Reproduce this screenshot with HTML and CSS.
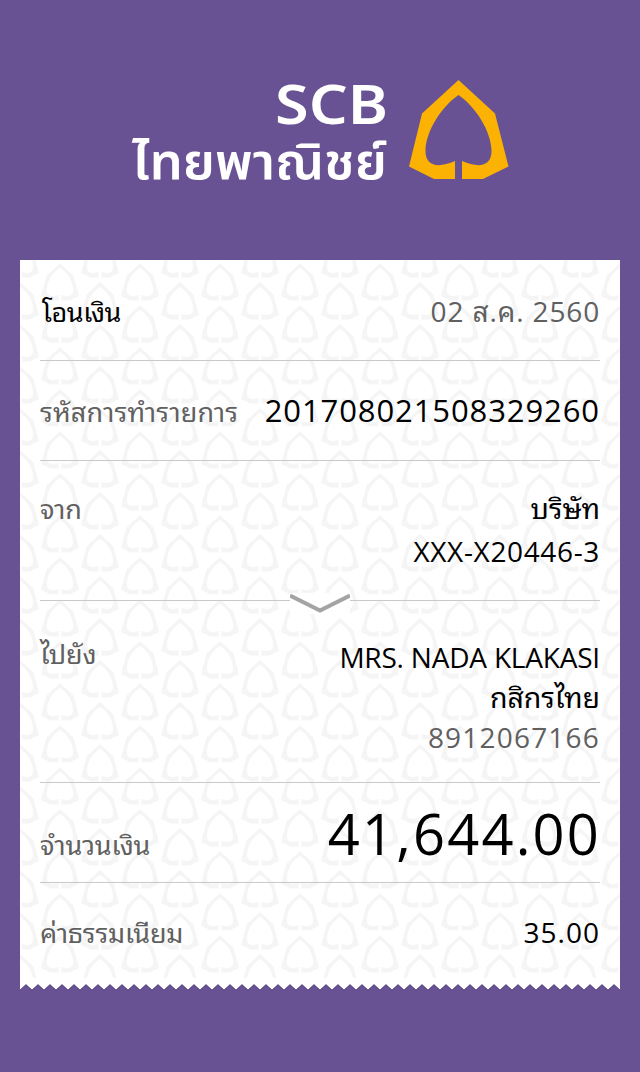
FILE: index.html
```html
<!DOCTYPE html>
<html lang="th">
<head>
<meta charset="utf-8">
<title>SCB</title>
<link rel="stylesheet" href="styles.css">
</head>
<body>
<header class="brand">
  <svg class="logo" width="378" height="110" viewBox="0 0 378 110" role="img">
    <text class="logo-latin" x="144" y="49" textLength="113" lengthAdjust="spacingAndGlyphs">SCB</text>
    <text class="logo-thai" x="1" y="104" textLength="255" lengthAdjust="spacingAndGlyphs">ไทยพาณิชย์</text>
    <path fill="#fcb202" fill-rule="evenodd" d="M327.500 5 364 38.500 377.500 91.500 352 104H331V86C347 93 360.500 92 360.500 76C360.500 57 345 32 327.500 20C310 32 294.500 57 294.500 76C294.500 92 308 93 324 86V104H303L278 91.500 291 38.500Z"/>
  </svg>
</header>
<main class="slip">
  <svg class="watermark" width="600" height="718">
    <defs>
      <path id="leaf" fill="#f5f5f5" fill-rule="evenodd" d="M19 0 32.500 12.500 38 33 28.500 37.500H20.500V32C28 34 32 33 32 27C32 18 26 9 19 5C12 9 6 18 6 27C6 33 10 34 17.500 32V37.500H9.500L0 33 5.500 12.500Z"/>
      <pattern id="leaves" width="80" height="42" patternUnits="userSpaceOnUse">
        <use href="#leaf" x="21" y="3"/>
        <use href="#leaf" x="61" y="22"/><use href="#leaf" x="-19" y="22"/>
        <use href="#leaf" x="61" y="-20"/><use href="#leaf" x="-19" y="-20"/>
      </pattern>
    </defs>
    <rect width="600" height="718" fill="url(#leaves)"/>
  </svg>
  <section class="row row-title"><span class="label dark title">โอนเงิน</span><span class="value date">02 ส.ค. 2560</span></section>
  <section class="row row-ref"><span class="label ref-label">รหัสการทำรายการ</span><span class="value dark ref">201708021508329260</span></section>
  <section class="row row-from"><span class="label from-label">จาก</span>
    <div class="stack"><span class="value dark company">บริษัท</span><span class="value dark account">XXX-X20446-3</span></div>
    <svg class="chevron" width="60" height="21" viewBox="0 0 60 21"><path d="M0 2.500 30 17.500 60 2.500" fill="none" stroke="#a4a4a4" stroke-width="4"/></svg>
  </section>
  <section class="row row-to"><span class="label to-label">ไปยัง</span>
    <div class="stack"><span class="value dark payee">MRS. NADA KLAKASI</span><span class="value dark bank">กสิกรไทย</span><span class="value number">8912067166</span></div>
  </section>
  <section class="row row-amount"><span class="label amount-label">จำนวนเงิน</span><span class="value dark amount">41,644.00</span></section>
  <section class="row row-fee"><span class="label fee-label">ค่าธรรมเนียม</span><span class="value dark fee">35.00</span></section>
</main>
<svg class="tear" width="600" height="7">
  <defs><pattern id="teeth" width="12" height="7" patternUnits="userSpaceOnUse"><path d="M0 0H12V6L6 0.500 0 6Z" fill="#fff"/><path d="M0 6.200 6 0.700 12 6.200" fill="none" stroke="#51437d" stroke-width="1"/></pattern></defs>
  <rect width="600" height="7" fill="url(#teeth)"/>
</svg>
</body>
</html>
```

FILE: styles.css
```css
* { box-sizing: border-box; }
body { margin: 0; min-height: 1072px; background: #685293; color: #606060; font-family: "Open Sans", "Noto Sans Thai Looped", Loma, Waree, Garuda, "Noto Sans Thai", sans-serif; }
.brand { height: 260px; padding: 75px 0 0 131px; }
.logo { display: block; overflow: visible; }
.logo text { fill: #fff; font-family: "Noto Sans", "Noto Sans Thai", sans-serif; }
.logo-latin { font-size: 55px; font-weight: 600; }
.logo-thai { font-size: 49px; font-weight: 600; }
.slip { position: relative; width: 600px; height: 724px; margin: 0 20px; background: #fff; }
.watermark { position: absolute; inset: 0; }
.tear { display: block; margin: 0 20px; }
.row { position: relative; display: flex; justify-content: space-between; align-items: baseline; margin: 0 20px; border-bottom: 1px solid #c9c9cc; white-space: nowrap; }
.row-title { height: 101px; padding-top: 31px; }
.row-ref { height: 100px; padding-top: 29px; }
.row-from { height: 140px; padding-top: 27px; }
.row-to { height: 182px; padding-top: 36px; }
.row-amount { height: 100px; padding-top: 30px; }
.row-fee { height: 100px; padding-top: 29px; border: 0; }
.label, .value { font-size: 28px; line-height: 40px; }
.dark { color: #000; }
.stack { display: flex; flex-direction: column; align-items: flex-end; }
.label { font-size: 27px; letter-spacing: -0.2px; }
.title { padding-left: 2px; letter-spacing: -0.5px; }
.ref-label { letter-spacing: 0.15px; }
.date { letter-spacing: 0.850px; }
.ref { font-size: 31px; letter-spacing: 0.9px; margin-right: 0; }
.company, .bank { font-size: 28.500px; letter-spacing: -0.1px; }
.account { margin-top: 3px; letter-spacing: 0.650px; }
.payee { letter-spacing: -0.2px; }
.to-label { align-self: flex-start; margin-top: -3px; }
.number { letter-spacing: 1.2px; margin-right: 0; }
.amount { font-size: 56px; letter-spacing: 2.200px; margin-right: -1px; }
.fee { letter-spacing: 1px; }
.chevron { position: absolute; left: 250px; bottom: -14px; background: #fff; }
```
